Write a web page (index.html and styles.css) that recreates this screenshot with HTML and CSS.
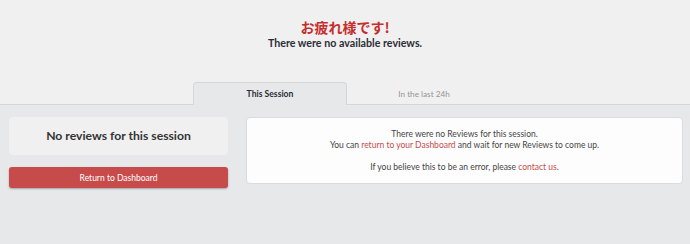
FILE: index.html
```html
<!DOCTYPE html>
<html lang="ja">
<head>
  <meta charset="UTF-8">
  <title>Review Session</title>
  <link rel="stylesheet" href="styles.css">
</head>
<body>

<div class="header">
  <h1 class="title">お疲れ様です!</h1>
  <p class="subtitle">There were no available reviews.</p>

  <div class="tabs">
    <div class="tab active">This Session</div>
    <div class="tab">In the last 24h</div>
  </div>
</div>

<div class="content">
  <div class="side">
    <div class="side-box">No reviews for this session</div>
    <button class="btn-return">Return to Dashboard</button>
  </div>

  <div class="message">
    <p>There were no Reviews for this session.<br>
    You can <a href="#">return to your Dashboard</a> and wait for new Reviews to come up.</p>
    <p>If you believe this to be an error, please <a href="#">contact us</a>.</p>
  </div>
</div>

</body>
</html>
```

FILE: styles.css
```css
html, body {
  margin: 0;
  padding: 0;
}
body {
  font-family: Lato, "Noto Sans CJK JP", sans-serif;
  background-color: #e7e8ea;
  color: #333;
  height: 244px;
  overflow: hidden;
}
.header {
  background-color: #f0f0f0;
  border-bottom: 1px solid #d6d6d6;
  padding-top: 18px;
  text-align: center;
}
.title {
  margin: 0;
  font-family: "Noto Sans CJK JP", sans-serif;
  font-size: 14px;
  font-weight: 700;
  line-height: 18px;
  color: #c62d2d;
}
.subtitle {
  margin: 0;
  font-size: 10.7px;
  font-weight: bold;
  line-height: 14px;
  color: #2c2c34;
}
.tabs {
  display: flex;
  margin-left: 193px;
  margin-top: 32px;
  margin-bottom: -1px;
}
.tab {
  width: 152px;
  height: 21px;
  line-height: 22px;
  font-size: 8.2px;
  color: #959595;
  border: 1px solid transparent;
  border-bottom: none;
}
.tab.active {
  background-color: #e7e8ea;
  border-color: #d6d6d6;
  border-radius: 4px 4px 0 0;
  font-weight: bold;
  font-size: 8.6px;
  color: #2c2c34;
  height: 22px;
}
.content {
  display: flex;
  align-items: flex-start;
  padding: 12px 7px 0 9px;
  gap: 18px;
}
.side {
  width: 219px;
  flex: none;
}
.side-box {
  background-color: #f0f0f0;
  border-radius: 4px;
  height: 38px;
  line-height: 38px;
  text-align: center;
  font-size: 12.2px;
  font-weight: bold;
  color: #333;
}
.btn-return {
  display: block;
  width: 100%;
  height: 21px;
  margin-top: 12px;
  border: none;
  border-radius: 3px;
  background-color: #c84b4b;
  color: #fff;
  font-family: Lato, sans-serif;
  font-size: 8.5px;
  box-shadow: 0 1px 2px rgba(0,0,0,0.3);
}
.message {
  flex: 1;
  background: #fdfdfd;
  border: 1px solid #dcdcdc;
  border-radius: 4px;
  text-align: center;
  font-size: 8.5px;
  color: #444;
  padding: 11px 0 10px;
}
.message p {
  margin: 0;
  line-height: 11px;
}
.message p + p {
  margin-top: 11px;
}
.message a {
  color: #c84b4b;
  text-decoration: none;
}
```
